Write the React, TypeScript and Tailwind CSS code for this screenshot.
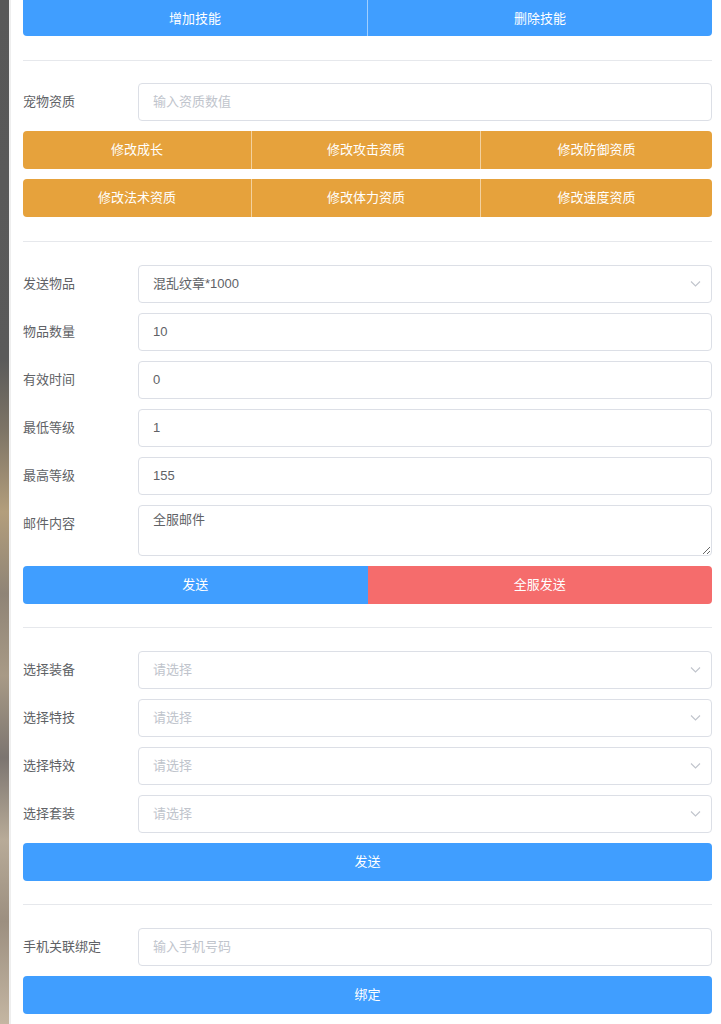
import React from "react";

const font = { fontFamily: '"Liberation Sans", "Noto Sans CJK SC", sans-serif' };

function Chevron() {
  return (
    <svg width="11" height="7" viewBox="0 0 11 7" className="absolute right-[11px] top-1/2 -translate-y-1/2">
      <path d="M1 1 L5.5 5.5 L10 1" fill="none" stroke="#c0c4cc" strokeWidth="1.1" />
    </svg>
  );
}

function Row({ label, children }: { label: string; children: React.ReactNode }) {
  return (
    <div className="flex items-start">
      <div className="w-[115px] shrink-0 text-[13px] leading-[38px] text-[#606266]">{label}</div>
      <div className="flex-1 relative">{children}</div>
    </div>
  );
}

function Input({ value, placeholder }: { value?: string; placeholder?: string }) {
  return (
    <div className="h-[38px] w-full rounded-[4px] border border-[#dcdfe6] bg-white px-[14px] text-[13px] leading-[36px]">
      {value ? <span className="text-[#606266]">{value}</span> : <span className="text-[#c0c4cc]">{placeholder}</span>}
    </div>
  );
}

function Select({ value, placeholder }: { value?: string; placeholder?: string }) {
  return (
    <div className="relative">
      <Input value={value} placeholder={placeholder} />
      <Chevron />
    </div>
  );
}

function Btn({ children, color, className = "" }: { children: React.ReactNode; color: string; className?: string }) {
  return (
    <div className={`h-[38px] flex items-center justify-center text-[13px] text-white ${color} ${className}`}>{children}</div>
  );
}

export default function App() {
  return (
    <div className="flex min-h-[1024px] w-[721px] overflow-hidden" style={font}>
      <div className="w-[9px] shrink-0 bg-[linear-gradient(to_bottom,#585858_0%,#5a5a5a_35%,#7d7466_42%,#b39e7c_50%,#8f8476_58%,#a89a86_66%,#7c7570_74%,#b8ab98_82%,#9c8f80_90%,#c4b6a2_100%)]" />
      <div className="w-[2px] shrink-0 bg-[#eeeeee]" />
      <div className="flex-1 bg-white pl-[12px] pr-[9px]">
        {/* skills buttons */}
        <div className="flex h-[36px] overflow-hidden rounded-b-[4px]">
          <Btn color="bg-[#409eff]" className="flex-1 h-[36px]">增加技能</Btn>
          <Btn color="bg-[#409eff]" className="flex-1 h-[36px] border-l border-white/50">删除技能</Btn>
        </div>

        <div className="mt-6 mb-[22px] h-px bg-[#e6e8ec]" />

        <div className="flex flex-col gap-[10px]">
          <Row label="宠物资质">
            <Input placeholder="输入资质数值" />
          </Row>
          <div className="grid grid-cols-[228fr_229fr_232fr] overflow-hidden rounded-[4px]">
            <Btn color="bg-[#e6a23c]">修改成长</Btn>
            <Btn color="bg-[#e6a23c]" className="border-l border-white/50">修改攻击资质</Btn>
            <Btn color="bg-[#e6a23c]" className="border-l border-white/50">修改防御资质</Btn>
          </div>
          <div className="grid grid-cols-[228fr_229fr_232fr] overflow-hidden rounded-[4px]">
            <Btn color="bg-[#e6a23c]">修改法术资质</Btn>
            <Btn color="bg-[#e6a23c]" className="border-l border-white/50">修改体力资质</Btn>
            <Btn color="bg-[#e6a23c]" className="border-l border-white/50">修改速度资质</Btn>
          </div>
        </div>

        <div className="mt-6 mb-[23px] h-px bg-[#e6e8ec]" />

        <div className="flex flex-col gap-[10px]">
          <Row label="发送物品">
            <Select value="混乱纹章*1000" />
          </Row>
          <Row label="物品数量">
            <Input value="10" />
          </Row>
          <Row label="有效时间">
            <Input value="0" />
          </Row>
          <Row label="最低等级">
            <Input value="1" />
          </Row>
          <Row label="最高等级">
            <Input value="155" />
          </Row>
          <Row label="邮件内容">
            <textarea
              defaultValue="全服邮件"
              className="block h-[51px] w-full rounded-[4px] border border-[#dcdfe6] bg-white px-[14px] py-[4px] text-[13px] leading-[20px] text-[#606266] outline-none"
              style={font}
            />
          </Row>
          <div className="flex overflow-hidden rounded-[4px]">
            <Btn color="bg-[#409eff]" className="flex-1">发送</Btn>
            <Btn color="bg-[#f56c6c]" className="flex-1">全服发送</Btn>
          </div>
        </div>

        <div className="mt-[23px] mb-[23px] h-px bg-[#e6e8ec]" />

        <div className="flex flex-col gap-[10px]">
          <Row label="选择装备">
            <Select placeholder="请选择" />
          </Row>
          <Row label="选择特技">
            <Select placeholder="请选择" />
          </Row>
          <Row label="选择特效">
            <Select placeholder="请选择" />
          </Row>
          <Row label="选择套装">
            <Select placeholder="请选择" />
          </Row>
          <Btn color="bg-[#409eff]" className="rounded-[4px]">发送</Btn>
        </div>

        <div className="mt-[23px] mb-[23px] h-px bg-[#e6e8ec]" />

        <div className="flex flex-col gap-[10px]">
          <Row label="手机关联绑定">
            <Input placeholder="输入手机号码" />
          </Row>
          <Btn color="bg-[#409eff]" className="rounded-[4px]">绑定</Btn>
        </div>
      </div>
    </div>
  );
}
